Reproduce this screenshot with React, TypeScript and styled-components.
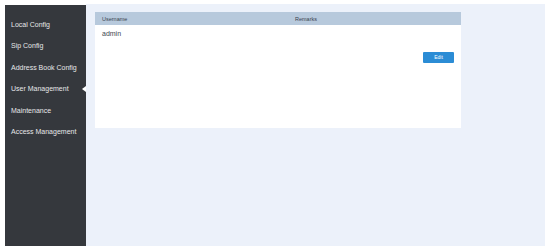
import React from "react";
import styled, { createGlobalStyle } from "styled-components";

const GlobalStyle = createGlobalStyle`
  html, body {
    margin: 0;
    padding: 0;
    background: #ffffff;
    font-family: "Liberation Sans", Arial, sans-serif;
  }
`;

const Page = styled.div`
  box-sizing: border-box;
  width: 550px;
  height: 252px;
  padding: 4px 5px 6px 5px;
  display: flex;
`;

const Sidebar = styled.nav`
  width: 81px;
  margin-top: 1px;
  background: #35383d;
  display: flex;
  flex-direction: column;
  padding-top: 9px;
  box-sizing: border-box;
`;

const MenuItem = styled.div<{ active?: boolean }>`
  position: relative;
  height: 21.4px;
  line-height: 21.4px;
  padding-left: 6px;
  font-size: 7px;
  color: #e6e7e9;
  white-space: nowrap;

  &::after {
    content: "";
    display: ${({ active }) => (active ? "block" : "none")};
    position: absolute;
    right: 0;
    top: 50%;
    margin-top: -3px;
    border-style: solid;
    border-width: 3px 4px 3px 0;
    border-color: transparent #ffffff transparent transparent;
  }
`;

const Main = styled.main`
  flex: 1;
  background: #ecf1fa;
  padding: 8px 0 0 9px;
`;

const Card = styled.section`
  width: 366px;
  height: 116px;
  background: #ffffff;
  display: flex;
  flex-direction: column;
`;

const HeaderRow = styled.div`
  height: 13px;
  background: #b7c9dc;
  display: grid;
  grid-template-columns: 193px 1fr;
  align-items: center;
  padding-left: 7px;
  font-size: 5.5px;
  color: #3c4450;
`;

const DataRow = styled.div`
  display: grid;
  grid-template-columns: 193px 1fr;
  height: 16px;
  align-items: center;
  padding-left: 7px;
  font-size: 7px;
  color: #404650;
`;

const Actions = styled.div`
  display: flex;
  justify-content: flex-end;
  padding: 11px 7px 0 0;
`;

const Button = styled.button`
  width: 31px;
  height: 11px;
  padding: 0;
  border: none;
  border-radius: 1px;
  background: #2b8cd5;
  color: #ffffff;
  font-family: "Liberation Sans", Arial, sans-serif;
  font-size: 5px;
  line-height: 11px;
`;

const menu = [
  "Local Config",
  "Sip Config",
  "Address Book Config",
  "User Management",
  "Maintenance",
  "Access Management",
];

export default function App() {
  return (
    <>
      <GlobalStyle />
      <Page>
        <Sidebar>
          {menu.map((m) => (
            <MenuItem key={m} active={m === "User Management"}>
              {m}
            </MenuItem>
          ))}
        </Sidebar>
        <Main>
          <Card>
            <HeaderRow>
              <span>Username</span>
              <span>Remarks</span>
            </HeaderRow>
            <DataRow>
              <span>admin</span>
              <span></span>
            </DataRow>
            <Actions>
              <Button>Edit</Button>
            </Actions>
          </Card>
        </Main>
      </Page>
    </>
  );
}
